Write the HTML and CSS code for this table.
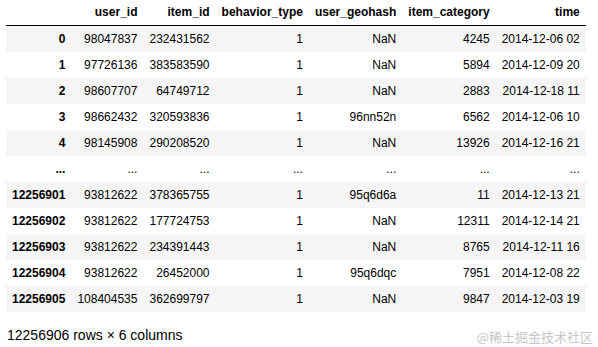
FILE: index.html
```html
<!DOCTYPE html>
<html lang="en">
<head>
    <meta charset="UTF-8">
    <meta name="viewport" content="width=device-width, initial-scale=1.0">
    <title>DataFrame</title>
    <link rel="stylesheet" href="styles.css">
</head>
<body>
    <div class="output">
        <table class="dataframe">
            <thead>
                <tr>
                    <th></th>
                    <th>user_id</th>
                    <th>item_id</th>
                    <th>behavior_type</th>
                    <th>user_geohash</th>
                    <th>item_category</th>
                    <th>time</th>
                </tr>
            </thead>
            <tbody>
                <tr><th>0</th><td>98047837</td><td>232431562</td><td>1</td><td>NaN</td><td>4245</td><td>2014-12-06 02</td></tr>
                <tr><th>1</th><td>97726136</td><td>383583590</td><td>1</td><td>NaN</td><td>5894</td><td>2014-12-09 20</td></tr>
                <tr><th>2</th><td>98607707</td><td>64749712</td><td>1</td><td>NaN</td><td>2883</td><td>2014-12-18 11</td></tr>
                <tr><th>3</th><td>98662432</td><td>320593836</td><td>1</td><td>96nn52n</td><td>6562</td><td>2014-12-06 10</td></tr>
                <tr><th>4</th><td>98145908</td><td>290208520</td><td>1</td><td>NaN</td><td>13926</td><td>2014-12-16 21</td></tr>
                <tr><th>...</th><td>...</td><td>...</td><td>...</td><td>...</td><td>...</td><td>...</td></tr>
                <tr><th>12256901</th><td>93812622</td><td>378365755</td><td>1</td><td>95q6d6a</td><td>11</td><td>2014-12-13 21</td></tr>
                <tr><th>12256902</th><td>93812622</td><td>177724753</td><td>1</td><td>NaN</td><td>12311</td><td>2014-12-14 21</td></tr>
                <tr><th>12256903</th><td>93812622</td><td>234391443</td><td>1</td><td>NaN</td><td>8765</td><td>2014-12-11 16</td></tr>
                <tr><th>12256904</th><td>93812622</td><td>26452000</td><td>1</td><td>95q6dqc</td><td>7951</td><td>2014-12-08 22</td></tr>
                <tr><th>12256905</th><td>108404535</td><td>362699797</td><td>1</td><td>NaN</td><td>9847</td><td>2014-12-03 19</td></tr>
            </tbody>
        </table>
        <p class="shape">12256906 rows × 6 columns</p>
    </div>
    <span class="watermark">@稀土掘金技术社区</span>
</body>
</html>
```

FILE: styles.css
```css
body {
    margin: 0;
    background-color: #fff;
    font-family: 'Liberation Sans', Arial, sans-serif;
    color: #000;
    position: relative;
    height: 347px;
    overflow: hidden;
}

.output {
    padding: 0 6px;
}

.dataframe {
    border-collapse: collapse;
    border-spacing: 0;
    font-size: 12px;
    margin-top: -1px;
}

.dataframe th,
.dataframe td {
    text-align: right;
    vertical-align: middle;
    padding: 6px;
    line-height: normal;
    white-space: nowrap;
    border: none;
}

.dataframe th {
    font-weight: bold;
}

.dataframe thead {
    border-bottom: 1px solid #000;
}

.dataframe thead th {
    vertical-align: bottom;
}

.dataframe tbody tr:nth-child(odd) {
    background-color: #f5f5f5;
}

.shape {
    margin: 15px 0 0 1px;
    font-size: 14px;
}

.watermark {
    position: absolute;
    right: 5px;
    bottom: 1px;
    font-family: 'Noto Sans CJK SC', sans-serif;
    font-size: 13px;
    color: #c6c6c6;
}
```
